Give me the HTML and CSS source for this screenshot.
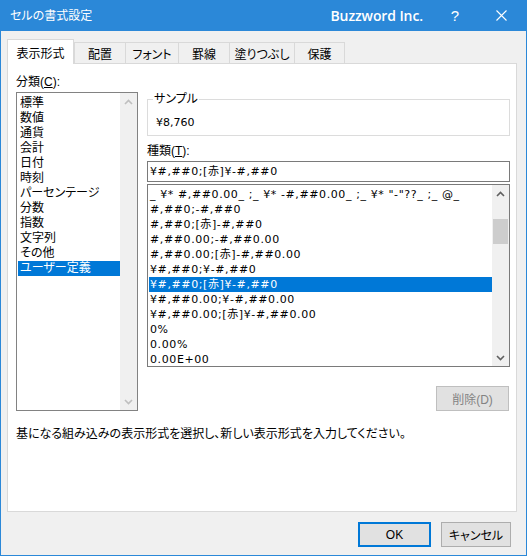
FILE: index.html
```html
<!DOCTYPE html>
<html lang="ja">
<head>
    <meta charset="UTF-8">
    <title>セルの書式設定</title>
    <link rel="stylesheet" href="styles.css">
</head>
<body>

<div class="window">
    <div class="titlebar">
        <span class="title">セルの書式設定</span>
        <span class="brand">Buzzword Inc.</span>
        <span class="tb-btn help">?</span>
        <span class="tb-btn close">
            <svg width="11" height="11" viewBox="0 0 11 11"><path d="M0.5 0.5 L10.5 10.5 M10.5 0.5 L0.5 10.5" stroke="#fff" stroke-width="1.1"/></svg>
        </span>
    </div>

    <div class="content">
        <!-- tab strip -->
        <div class="tabs">
            <div class="tab active tab-number">表示形式</div>
            <div class="tab tab-align">配置</div>
            <div class="tab tab-font">フォント</div>
            <div class="tab tab-border">罫線</div>
            <div class="tab tab-fill">塗りつぶし</div>
            <div class="tab tab-protect">保護</div>
        </div>

        <div class="panel">
            <div class="cols">
                <div class="col-left">
                    <div class="label">分類(<u>C</u>):</div>
                    <div class="listbox category">
                        <ul class="items">
                            <li>標準</li>
                            <li>数値</li>
                            <li>通貨</li>
                            <li>会計</li>
                            <li>日付</li>
                            <li>時刻</li>
                            <li>パーセンテージ</li>
                            <li>分数</li>
                            <li>指数</li>
                            <li>文字列</li>
                            <li>その他</li>
                            <li class="selected">ユーザー定義</li>
                        </ul>
                        <div class="vscroll">
                            <div class="sb-btn disabled">
                                <svg width="9" height="6" viewBox="0 0 9 6"><path d="M1 5 L4.5 1.5 L8 5" fill="none" stroke="currentColor" stroke-width="1.6"/></svg>
                            </div>
                            <div class="sb-track"></div>
                            <div class="sb-btn disabled">
                                <svg width="9" height="6" viewBox="0 0 9 6"><path d="M1 1 L4.5 4.5 L8 1" fill="none" stroke="currentColor" stroke-width="1.6"/></svg>
                            </div>
                        </div>
                    </div>
                </div>

                <div class="col-right">
                    <fieldset class="sample">
                        <legend>サンプル</legend>
                        <div class="sample-value">¥8,760</div>
                    </fieldset>

                    <div class="label type-label">種類(<u>T</u>):</div>
                    <div class="textbox">¥#,##0;[赤]¥-#,##0</div>

                    <div class="listbox formats">
                        <ul class="items">
                            <li>_ ¥* #,##0.00_ ;_ ¥* -#,##0.00_ ;_ ¥* "-"??_ ;_ @_</li>
                            <li>#,##0;-#,##0</li>
                            <li>#,##0;[赤]-#,##0</li>
                            <li>#,##0.00;-#,##0.00</li>
                            <li>#,##0.00;[赤]-#,##0.00</li>
                            <li>¥#,##0;¥-#,##0</li>
                            <li class="selected">¥#,##0;[赤]¥-#,##0</li>
                            <li>¥#,##0.00;¥-#,##0.00</li>
                            <li>¥#,##0.00;[赤]¥-#,##0.00</li>
                            <li>0%</li>
                            <li>0.00%</li>
                            <li>0.00E+00</li>
                        </ul>
                        <div class="vscroll">
                            <div class="sb-btn">
                                <svg width="9" height="6" viewBox="0 0 9 6"><path d="M1 5 L4.5 1.5 L8 5" fill="none" stroke="currentColor" stroke-width="1.6"/></svg>
                            </div>
                            <div class="sb-track">
                                <div class="sb-thumb"></div>
                            </div>
                            <div class="sb-btn">
                                <svg width="9" height="6" viewBox="0 0 9 6"><path d="M1 1 L4.5 4.5 L8 1" fill="none" stroke="currentColor" stroke-width="1.6"/></svg>
                            </div>
                        </div>
                    </div>

                    <div class="actions">
                        <button class="btn delete" disabled>削除(D)</button>
                    </div>
                </div>
            </div>

            <p class="hint">基になる組み込みの表示形式を選択し、新しい表示形式を入力してください。</p>
        </div>

        <div class="footer">
            <button class="btn default ok">OK</button>
            <button class="btn cancel">キャンセル</button>
        </div>
    </div>
</div>

</body>
</html>
```

FILE: styles.css
```css
* { box-sizing: border-box; }
body {
    margin: 0;
    font-family: "Liberation Sans", "Noto Sans CJK JP", sans-serif;
    font-feature-settings: "palt";
    font-size: 12px;
    color: #000;
    background: #fff;
}
.window {
    width: 527px;
    height: 556px;
    background: #f0f0f0;
    border: 1px solid #2b88d8;
    border-top: none;
    display: flex;
    flex-direction: column;
}

/* title bar */
.titlebar {
    height: 31px;
    flex-shrink: 0;
    background: #2b88d8;
    color: #fff;
    display: flex;
    align-items: center;
    padding-left: 9px;
}
.title {
    font-size: 12px;
    line-height: 15px;
    margin-top: 1px;
}
.brand {
    margin-left: auto;
    font-family: "Open Sans", sans-serif;
    font-weight: 600;
    font-size: 14px;
    letter-spacing: -0.1px;
    margin-top: -1px;
}
.tb-btn {
    display: flex;
    align-items: center;
    justify-content: center;
}
.help {
    width: 46px;
    margin-left: 9px;
    font-family: "Liberation Sans", sans-serif;
    font-size: 15px;
}
.close {
    width: 46px;
    margin-right: 2px;
}

.content {
    flex: 1;
    display: flex;
    flex-direction: column;
    padding: 8px 9px 0 6px;
}

/* tabs */
.tabs {
    display: flex;
    align-items: flex-end;
    height: 25px;
    margin-bottom: -1px;
}
.tab {
    height: 22px;
    background: #f0f0f0;
    border: 1px solid #d9d9d9;
    border-bottom: none;
    margin-left: -1px;
    display: flex;
    align-items: center;
    justify-content: center;
    padding-bottom: 1px;
}
.tab.active {
    position: relative;
    z-index: 1;
    height: 25px;
    margin-left: 0;
    background: #fff;
    padding-bottom: 0;
    padding-top: 1px;
}
.tab.active + .tab { margin-left: 0; }
.tab-number { width: 67px; }
.tab-align { width: 52px; }
.tab-font { width: 54px; }
.tab-border { width: 52px; }
.tab-fill { width: 66px; }
.tab-protect { width: 51px; }

.panel {
    height: 449px;
    background: #fff;
    border: 1px solid #d9d9d9;
    padding: 11px 0 0 8px;
}
.cols {
    display: grid;
    grid-template-columns: 122px 363px;
    column-gap: 9px;
}
.col-right { padding-top: 17px; }
.label {
    line-height: 15px;
    height: 15px;
    margin-bottom: 2px;
}
.label u { text-decoration-thickness: 1px; text-underline-offset: 1px; }

/* list boxes */
.listbox {
    display: flex;
    background: #fff;
    border: 1px solid #828282;
    overflow: hidden;
}
.items {
    flex: 1;
    list-style: none;
    margin: 0;
    padding: 1px 0 0 1px;
    overflow: hidden;
}
.items li {
    height: 15px;
    line-height: 15px;
    padding-left: 2px;
    white-space: nowrap;
}
.items li.selected {
    background: #0078d7;
    color: #fff;
}
.category { height: 319px; }
.category .items { padding-top: 3px; }

/* number format strings */
.formats,
.textbox,
.sample-value {
    font-family: "DejaVu Sans", "Noto Sans CJK JP", sans-serif;
    font-size: 11px;
    letter-spacing: 0.6px;
}
.formats {
    height: 183px;
    margin-top: 2px;
    border-color: #7a7a7a;
}
.formats .items { padding-top: 2px; }
.formats .items li { padding-left: 1px; }

.vscroll {
    width: 17px;
    flex-shrink: 0;
    background: #f0f0f0;
    display: flex;
    flex-direction: column;
}
.sb-btn {
    height: 17px;
    display: flex;
    align-items: center;
    justify-content: center;
    color: #606060;
}
.sb-btn.disabled { color: #bfbfbf; }
.sb-track { flex: 1; }
.sb-thumb {
    margin: 17px 1px 0;
    height: 25px;
    background: #cdcdcd;
}

/* sample box */
.sample {
    margin: 0;
    padding: 0 0 0 5px;
    height: 44px;
    border: 1px solid #dcdcdc;
}
.sample legend {
    padding: 0 1px;
    line-height: 14px;
}
.sample .sample-value {
    margin-top: 9px;
    padding-left: 3px;
    line-height: 15px;
    letter-spacing: 0;
}
.type-label { margin-top: 8px; }
.textbox {
    height: 21px;
    border: 1px solid #7a7a7a;
    padding-left: 2px;
    line-height: 19px;
}

.actions {
    display: flex;
    justify-content: flex-end;
    margin-top: 19px;
    padding-right: 1px;
}

/* push buttons */
.btn {
    font: inherit;
    height: 25px;
    background: #e1e1e1;
    border: 1px solid #adadad;
    color: #000;
    padding: 0;
}
.btn.delete {
    width: 73px;
    background: #e1e1e1;
    border-color: #bfbfbf;
    color: #838383;
}
.btn.default {
    border: 2px solid #0078d7;
}

.hint {
    margin: 16px 0 0;
    line-height: 15px;
}

.footer {
    display: flex;
    justify-content: flex-end;
    gap: 10px;
    margin-top: 10px;
    padding-right: 6px;
}
.ok { width: 73px; }
.cancel { width: 70px; }
```
